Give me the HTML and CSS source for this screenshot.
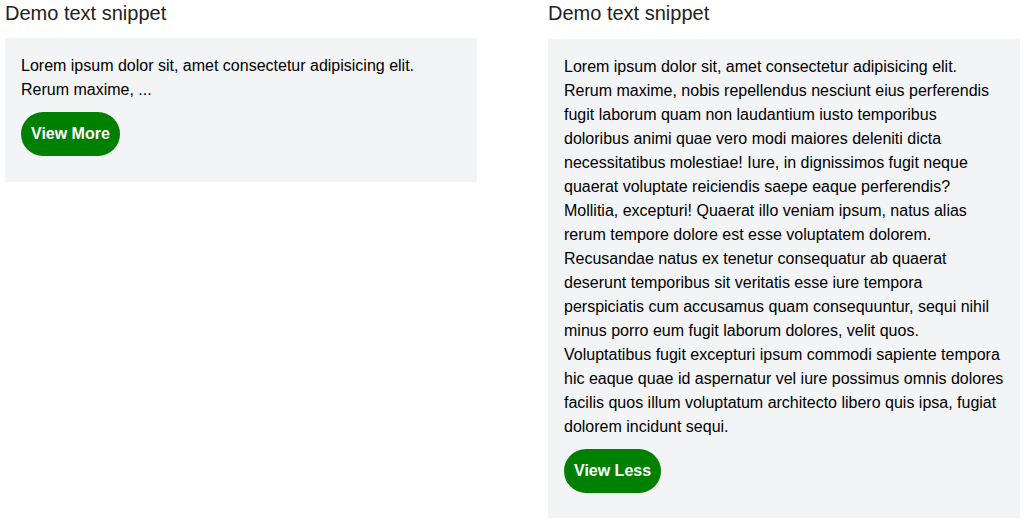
FILE: index.html
```html
<!DOCTYPE html>
<html lang="en">
<head>
<meta charset="utf-8">
<title>Demo text snippet</title>
<link rel="stylesheet" href="styles.css">
</head>
<body>
<div class="columns">
  <section class="snippet">
    <h2 class="snippet-title">Demo text snippet</h2>
    <div class="snippet-box">
      <p class="snippet-text">Lorem ipsum dolor sit, amet consectetur adipisicing elit. Rerum maxime, ...</p>
      <button class="snippet-btn" type="button">View More</button>
    </div>
  </section>
  <section class="snippet snippet-open">
    <h2 class="snippet-title">Demo text snippet</h2>
    <div class="snippet-box">
      <p class="snippet-text">Lorem ipsum dolor sit, amet consectetur adipisicing elit. Rerum maxime, nobis repellendus nesciunt eius perferendis fugit laborum quam non laudantium iusto temporibus doloribus animi quae vero modi maiores deleniti dicta necessitatibus molestiae! Iure, in dignissimos fugit neque quaerat voluptate reiciendis saepe eaque perferendis? Mollitia, excepturi! Quaerat illo veniam ipsum, natus alias rerum tempore dolore est esse voluptatem dolorem. Recusandae natus ex tenetur consequatur ab quaerat deserunt temporibus sit veritatis esse iure tempora perspiciatis cum accusamus quam consequuntur, sequi nihil minus porro eum fugit laborum dolores, velit quos. Voluptatibus fugit excepturi ipsum commodi sapiente tempora hic eaque quae id aspernatur vel iure possimus omnis dolores facilis quos illum voluptatum architecto libero quis ipsa, fugiat dolorem incidunt sequi.</p>
      <button class="snippet-btn" type="button">View Less</button>
    </div>
  </section>
</div>
</body>
</html>
```

FILE: styles.css
```css
html, body {
  margin: 0;
  padding: 0;
  background: #ffffff;
}

body {
  font-family: "Liberation Sans", Arial, sans-serif;
  color: #000;
}

.columns {
  display: grid;
  grid-template-columns: 472px 472px;
  column-gap: 71px;
  align-items: start;
  padding: 0 4px 0 5px;
}

.snippet-title {
  margin: 1px 0 13px 0;
  font-size: 20px;
  font-weight: 400;
  line-height: 24px;
  color: #222;
}

.snippet-open .snippet-title {
  margin-bottom: 14px;
}

.snippet-box {
  background: #f3f4f6;
  padding: 16px 16px 26px;
  display: flex;
  flex-direction: column;
  align-items: flex-start;
  gap: 10px;
}

.snippet-open .snippet-box {
  padding-bottom: 25px;
}

.snippet-text {
  margin: 0;
  font-size: 16px;
  line-height: 24px;
}

.snippet-btn {
  font-family: "Liberation Sans", Arial, sans-serif;
  font-size: 16px;
  font-weight: 700;
  line-height: 24px;
  color: #fff;
  background: #008000;
  border: 0;
  border-radius: 22px;
  padding: 10px;
  cursor: pointer;
}
```
